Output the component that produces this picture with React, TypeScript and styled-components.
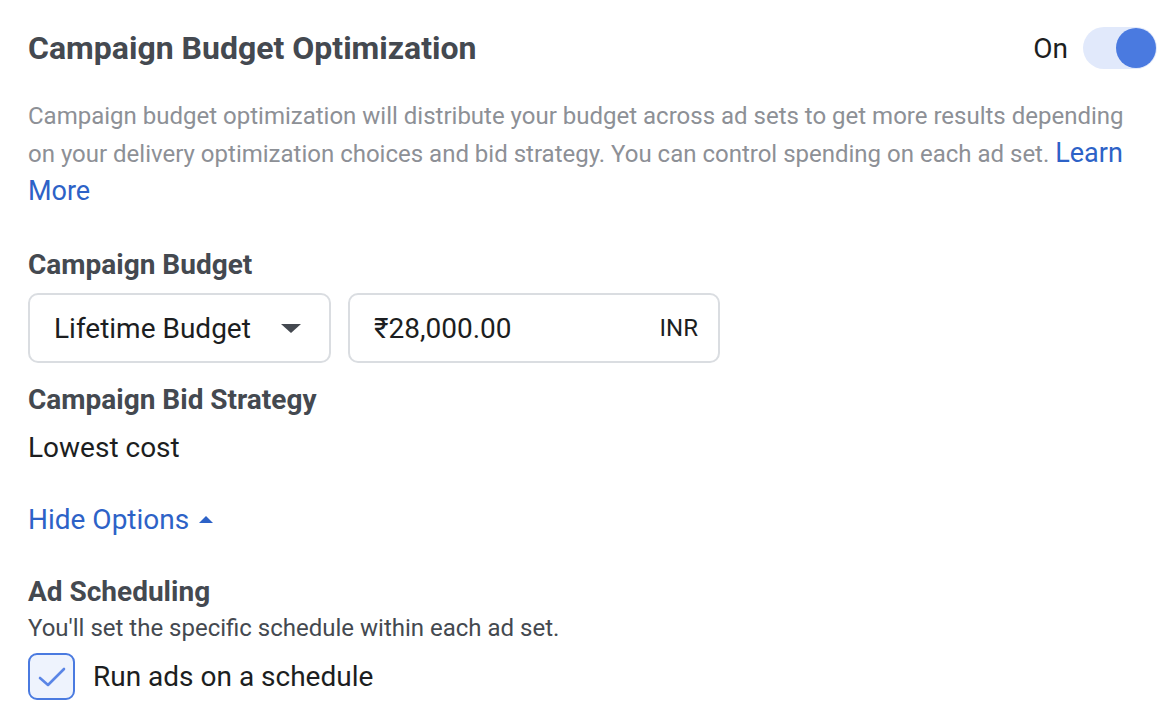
import React, { useState } from "react";
import styled, { createGlobalStyle } from "styled-components";

const GlobalStyle = createGlobalStyle`
  html, body {
    margin: 0;
    padding: 0;
    background: #ffffff;
  }
  body {
    font-family: Roboto, "Liberation Sans", Arial, sans-serif;
    -webkit-font-smoothing: antialiased;
  }
`;

const Page = styled.div`
  padding: 24px 9px 0 28px;
  width: 1166px;
  box-sizing: border-box;
`;

const HeaderRow = styled.div`
  display: flex;
  align-items: center;
  justify-content: space-between;
  height: 48px;
`;

const Title = styled.h1`
  margin: 0;
  font-size: 32px;
  font-weight: 700;
  color: #444950;
`;

const ToggleWrap = styled.div`
  display: flex;
  align-items: center;
  gap: 15px;
`;

const ToggleLabel = styled.span`
  font-size: 28px;
  color: #1c1e21;
`;

const Track = styled.button<{ $on: boolean }>`
  width: 74px;
  height: 42px;
  border-radius: 21px;
  border: none;
  padding: 0;
  background: ${(p) => (p.$on ? "#e1e9fb" : "#e4e6eb")};
  display: flex;
  align-items: center;
  justify-content: ${(p) => (p.$on ? "flex-end" : "flex-start")};
  cursor: pointer;
`;

const Knob = styled.span<{ $on: boolean }>`
  width: 40px;
  height: 40px;
  border-radius: 50%;
  background: ${(p) => (p.$on ? "#4a7ae0" : "#ffffff")};
  margin: 0 1px;
`;

const Description = styled.p`
  margin: 25px 0 0;
  max-width: 1102px;
  font-size: 24px;
  line-height: 38px;
  color: #8d9096;
`;

const Link = styled.a<{ $size?: number }>`
  color: #2d62c7;
  text-decoration: none;
  cursor: pointer;
  ${(p) => (p.$size ? `font-size: ${p.$size}px; line-height: 1;` : "")}
`;

const SectionLabel = styled.div<{ $mt: number }>`
  margin-top: ${(p) => p.$mt}px;
  font-size: 28px;
  font-weight: 700;
  line-height: 32px;
  color: #444950;
`;

const FieldRow = styled.div`
  display: flex;
  gap: 17px;
  margin-top: 12px;
`;

const Box = styled.div<{ $w: number }>`
  width: ${(p) => p.$w}px;
  height: 70px;
  flex: none;
  box-sizing: border-box;
  border: 2px solid #dadde1;
  border-radius: 10px;
  display: flex;
  align-items: center;
  justify-content: space-between;
  padding: 0 20px 0 24px;
  font-size: 28px;
  color: #1c1e21;
`;

const Caret = styled.span`
  width: 0;
  height: 0;
  border-left: 10px solid transparent;
  border-right: 10px solid transparent;
  border-top: 9px solid #444950;
  margin: 1px 8px 0 0;
`;

const SmallCaret = styled.span`
  display: inline-block;
  width: 0;
  height: 0;
  border-left: 7px solid transparent;
  border-right: 7px solid transparent;
  border-bottom: 7px solid #2d62c7;
  margin-left: 10px;
  vertical-align: 6px;
`;

const Currency = styled.span`
  font-size: 24px;
  color: #1c1e21;
`;

const PlainText = styled.div<{ $mt: number }>`
  margin-top: ${(p) => p.$mt}px;
  font-size: 28px;
  line-height: 32px;
  color: #1c1e21;
`;

const HelpText = styled.div`
  margin-top: 6px;
  font-size: 24px;
  line-height: 28px;
  color: #444950;
`;

const CheckRow = styled.label`
  display: flex;
  align-items: center;
  gap: 18px;
  margin-top: 11px;
  cursor: pointer;
  font-size: 28px;
  color: #1c1e21;
`;

const CheckBox = styled.span<{ $checked: boolean }>`
  width: 47px;
  height: 47px;
  flex: none;
  box-sizing: border-box;
  border: 2px solid #4a7ae0;
  border-radius: 9px;
  background: ${(p) => (p.$checked ? "#eef3fd" : "#ffffff")};
  display: flex;
  align-items: center;
  justify-content: center;
`;

export default function App() {
  const [on, setOn] = useState(true);
  const [checked, setChecked] = useState(true);

  return (
    <>
      <GlobalStyle />
      <Page>
        <HeaderRow>
          <Title>Campaign Budget Optimization</Title>
          <ToggleWrap>
            <ToggleLabel>{on ? "On" : "Off"}</ToggleLabel>
            <Track $on={on} onClick={() => setOn(!on)}>
              <Knob $on={on} />
            </Track>
          </ToggleWrap>
        </HeaderRow>

        <Description>
          Campaign budget optimization will distribute your budget across ad
          sets to get more results depending on your delivery optimization
          choices and bid strategy. You can control spending on each ad set.{" "}
          <Link $size={27}>Learn More</Link>
        </Description>

        <SectionLabel $mt={38}>Campaign Budget</SectionLabel>
        <FieldRow>
          <Box $w={303}>
            Lifetime Budget
            <Caret />
          </Box>
          <Box $w={372}>
            ₹28,000.00
            <Currency>INR</Currency>
          </Box>
        </FieldRow>

        <SectionLabel $mt={21}>Campaign Bid Strategy</SectionLabel>
        <PlainText $mt={16}>Lowest cost</PlainText>

        <PlainText $mt={40}>
          <Link>Hide Options</Link>
          <SmallCaret />
        </PlainText>

        <SectionLabel $mt={40}>Ad Scheduling</SectionLabel>
        <HelpText>You'll set the specific schedule within each ad set.</HelpText>
        <CheckRow onClick={() => setChecked(!checked)}>
          <CheckBox $checked={checked}>
            {checked && (
              <svg width="30" height="24" viewBox="0 0 30 24">
                <path
                  d="M3 13 L11 20 L27 4"
                  fill="none"
                  stroke="#5a85e6"
                  strokeWidth="2.6"
                  strokeLinecap="round"
                  strokeLinejoin="round"
                />
              </svg>
            )}
          </CheckBox>
          Run ads on a schedule
        </CheckRow>
      </Page>
    </>
  );
}
